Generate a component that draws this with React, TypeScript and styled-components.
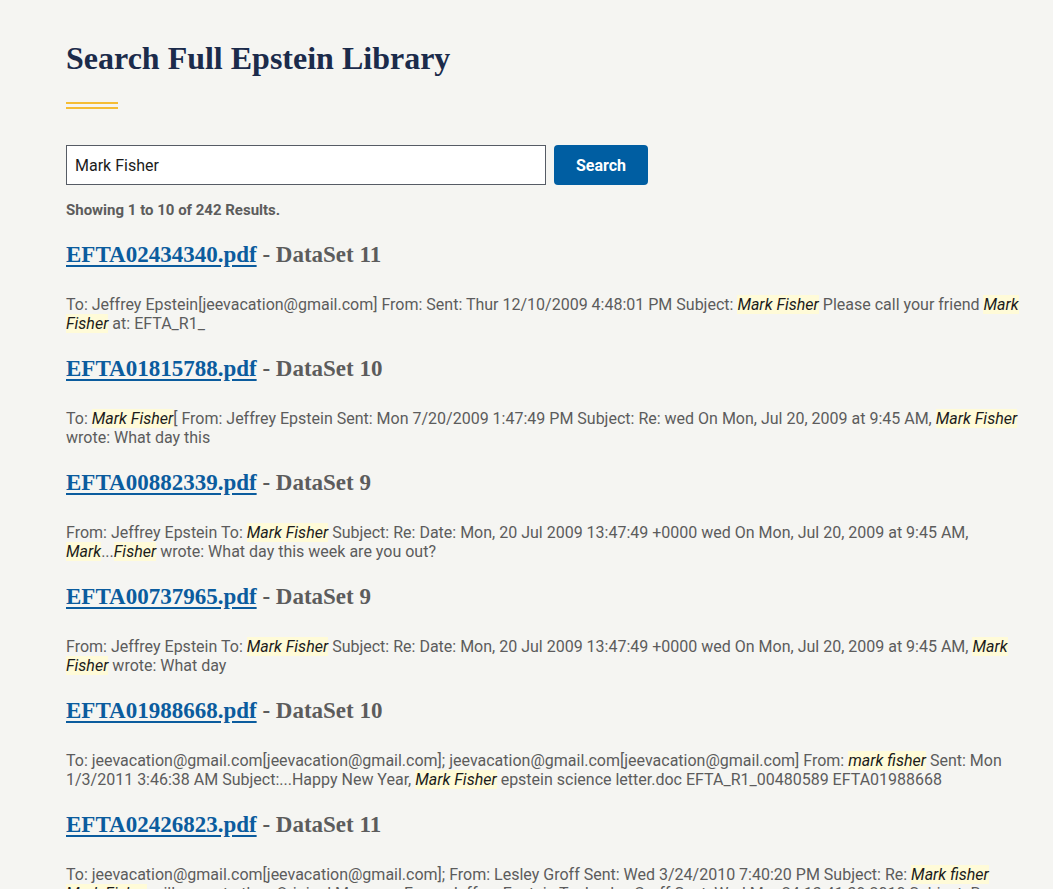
import React from "react";
import styled, { createGlobalStyle } from "styled-components";

const Global = createGlobalStyle`
  body { margin: 0; background: #f5f5f2; font-family: Roboto, "Liberation Sans", sans-serif; }
`;

const Page = styled.div`
  padding: 38px 0 0 66px;
  width: 960px;
`;

const Title = styled.h1`
  font-family: "Liberation Serif", serif;
  font-size: 32px;
  line-height: 40px;
  font-weight: 700;
  color: #1b2b4b;
  margin: 0;
`;

const Rule = styled.div`
  width: 52px;
  height: 3px;
  border-top: 2px solid #f5bd35;
  border-bottom: 2px solid #f5bd35;
  margin: 24px 0 36px;
`;

const Form = styled.form`
  display: flex;
  gap: 8px;
`;

const Input = styled.input`
  width: 480px;
  height: 40px;
  box-sizing: border-box;
  border: 1px solid #565c65;
  padding: 0 8px;
  font: 16px Roboto, sans-serif;
  color: #1b1b1b;
  background: #fff;
`;

const Button = styled.button`
  width: 94px;
  height: 40px;
  border: 0;
  border-radius: 4px;
  background: #005ea2;
  color: #fff;
  font: 700 16px Roboto, sans-serif;
`;

const Count = styled.p`
  margin: 16px 0 22px;
  font-size: 15px;
  font-weight: 700;
  color: #5c5c5c;
`;

const Result = styled.div`
  margin-bottom: 22px;
`;

const ResTitle = styled.h3`
  font-family: "Liberation Serif", serif;
  font-size: 23px;
  line-height: 28px;
  font-weight: 700;
  color: #5c5c5c;
  margin: 0 0 26px;
  a { color: #0b5c9e; text-decoration: underline; text-underline-offset: 3px; }
`;

const Snippet = styled.p`
  margin: 0;
  font-size: 16px;
  line-height: 19px;
  color: #5c5c5c;
  mark { background: #fffbd8; color: #1b1b1b; font-style: italic; }
`;

const results: [string, string, string][] = [
  ["EFTA02434340.pdf", "11", "To: Jeffrey Epstein[jeevacation@gmail.com] From: Sent: Thur 12/10/2009 4:48:01 PM Subject: *Mark Fisher* Please call your friend *Mark Fisher* at: EFTA_R1_"],
  ["EFTA01815788.pdf", "10", "To: *Mark Fisher*[ From: Jeffrey Epstein Sent: Mon 7/20/2009 1:47:49 PM Subject: Re: wed On Mon, Jul 20, 2009 at 9:45 AM, *Mark Fisher* wrote: What day this"],
  ["EFTA00882339.pdf", "9", "From: Jeffrey Epstein To: *Mark Fisher* Subject: Re: Date: Mon, 20 Jul 2009 13:47:49 +0000 wed On Mon, Jul 20, 2009 at 9:45 AM, *Mark*...*Fisher* wrote: What day this week are you out?"],
  ["EFTA00737965.pdf", "9", "From: Jeffrey Epstein To: *Mark Fisher* Subject: Re: Date: Mon, 20 Jul 2009 13:47:49 +0000 wed On Mon, Jul 20, 2009 at 9:45 AM, *Mark Fisher* wrote: What day"],
  ["EFTA01988668.pdf", "10", "To: jeevacation@gmail.com[jeevacation@gmail.com]; jeevacation@gmail.com[jeevacation@gmail.com] From: *mark fisher* Sent: Mon 1/3/2011 3:46:38 AM Subject:...Happy New Year, *Mark Fisher* epstein science letter.doc EFTA_R1_00480589 EFTA01988668"],
  ["EFTA02426823.pdf", "11", "To: jeevacation@gmail.com[jeevacation@gmail.com]; From: Lesley Groff Sent: Wed 3/24/2010 7:40:20 PM Subject: Re: *Mark fisher* *Mark Fisher* will come to the...Original Message From: Jeffrey Epstein To: Lesley Groff Sent: Wed Mar 24 13:41:39 2010 Subject: Re: *Mark fisher* tell him 15 minutes.... no more On Wed, Mar 24, 2010 at 1:09 PM, Lesley Groff wrote: Jeffrey, yesterday I had already"],
];

const renderSnippet = (s: string) =>
  s.split("*").map((part, i) => (i % 2 ? <mark key={i}>{part}</mark> : <React.Fragment key={i}>{part}</React.Fragment>));

export default function App() {
  return (
    <Page>
      <Global />
      <Title>Search Full Epstein Library</Title>
      <Rule />
      <Form onSubmit={(e) => e.preventDefault()}>
        <Input defaultValue="Mark Fisher" />
        <Button>Search</Button>
      </Form>
      <Count>Showing 1 to 10 of 242 Results.</Count>
      {results.map(([file, ds, text]) => (
        <Result key={file}>
          <ResTitle>
            <a href="#">{file}</a> - DataSet {ds}
          </ResTitle>
          <Snippet>{renderSnippet(text)}</Snippet>
        </Result>
      ))}
    </Page>
  );
}
